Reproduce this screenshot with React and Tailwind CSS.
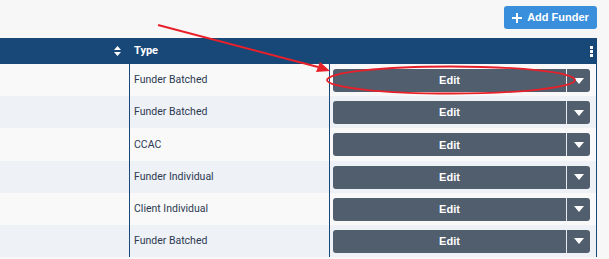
import React from 'react';

const rows = [
  'Funder Batched',
  'Funder Batched',
  'CCAC',
  'Funder Individual',
  'Client Individual',
  'Funder Batched',
];

function SortIcon() {
  return (
    <svg width="7" height="10" viewBox="0 0 7 10" className="fill-white">
      <path d="M3.5 0 L7 4 H0 Z" />
      <path d="M3.5 10 L7 6 H0 Z" />
    </svg>
  );
}

function EditButton() {
  return (
    <div className="flex h-[23px] w-[257px] overflow-hidden rounded-[3px] bg-[#505e6e] text-white">
      <div className="flex flex-1 items-center justify-center font-['Liberation_Sans',sans-serif] text-[11px] font-bold">
        Edit
      </div>
      <div className="w-px bg-[#e8ecf0]" />
      <div className="flex w-[23px] items-center justify-center">
        <svg width="10" height="6" viewBox="0 0 10 6" className="fill-white">
          <path d="M0 0 H10 L5 6 Z" />
        </svg>
      </div>
    </div>
  );
}

export default function App() {
  return (
    <div className="relative h-[259px] w-[609px] overflow-hidden bg-[#f7f7f7] font-['Roboto',sans-serif]">
      {/* Toolbar */}
      <div className="flex h-[38px] w-[597px] items-start justify-end pt-[6px]">
        <button className="flex h-[23px] w-[93px] items-center justify-center gap-[5px] rounded-[3px] bg-[#3a8fdd] font-['Liberation_Sans',sans-serif] text-[11px] font-bold text-white">
          <svg width="10" height="10" viewBox="0 0 10 10" className="fill-white">
            <path d="M4 0 H6 V4 H10 V6 H6 V10 H4 V6 H0 V4 H4 Z" />
          </svg>
          Add Funder
        </button>
      </div>

      {/* Table */}
      <div className="w-[597px]">
        <div className="flex h-[26px] items-center bg-[#174878] text-white">
          <div className="flex w-[130px] items-center justify-end pr-[9px]">
            <SortIcon />
          </div>
          <div className="w-[200px] pl-[4px] text-[11px] font-bold">Type</div>
          <div className="flex flex-1 justify-end pr-[4px]">
            <svg width="3" height="11" viewBox="0 0 3 11" className="fill-white">
              <rect x="0" y="0" width="3" height="3" />
              <rect x="0" y="4" width="3" height="3" />
              <rect x="0" y="8" width="3" height="3" />
            </svg>
          </div>
        </div>
        {rows.map((type, i) => (
          <div
            key={i}
            className={`flex h-[32.2px] ${i % 2 === 0 ? 'bg-[#f9f9f9]' : 'bg-[#eef1f6]'}`}
          >
            <div className="w-[130px] border-r border-[#174878]" />
            <div className="flex w-[200px] items-center border-r border-[#174878] pl-[4px] text-[10.5px] text-[#2d3a52]">
              {type}
            </div>
            <div className="flex flex-1 items-start border-r border-[#174878] pl-[3px] pt-[5px]">
              <EditButton />
            </div>
          </div>
        ))}
      </div>

      {/* Annotation overlay */}
      <svg className="pointer-events-none absolute left-0 top-0" width="609" height="259">
        <line x1="158" y1="25" x2="318" y2="67" stroke="#e8202a" strokeWidth="2" />
        <path d="M330 71 L316 72 L320 62 Z" fill="#e8202a" />
        <ellipse cx="451" cy="80" rx="124" ry="13.5" fill="none" stroke="#e8202a" strokeWidth="1.8" />
      </svg>
    </div>
  );
}
